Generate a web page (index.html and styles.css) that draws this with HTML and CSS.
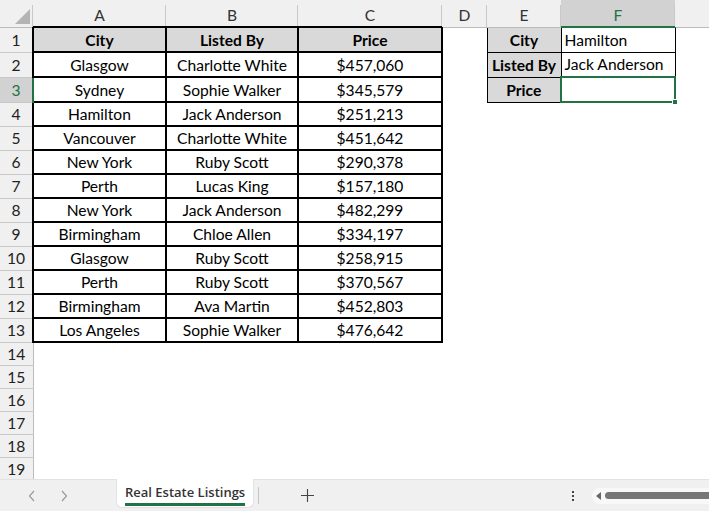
FILE: index.html
```html
<!DOCTYPE html>
<html lang="en">
<head>
    <meta charset="UTF-8">
    <title>Real Estate Listings</title>
    <link rel="stylesheet" href="styles.css">
</head>
<body>

    <div class="sheet">
        <table class="grid">
            <colgroup>
                <col class="w-hdr">
                <col class="w-a">
                <col class="w-b">
                <col class="w-c">
                <col class="w-d">
                <col class="w-e">
                <col class="w-f">
                <col>
            </colgroup>

            <!-- Column letters -->
            <tr class="heads">
                <th class="corner"><span class="tri"></span></th>
                <th>A</th>
                <th>B</th>
                <th>C</th>
                <th>D</th>
                <th>E</th>
                <th class="sel">F</th>
                <th class="last"></th>
            </tr>

            <tr class="tall">
                <th class="num">1</th>
                <td class="box title">City</td>
                <td class="box title">Listed By</td>
                <td class="box title">Price</td>
                <td></td>
                <td class="key">City</td>
                <td class="val">Hamilton</td>
                <td></td>
            </tr>
            <tr class="tall">
                <th class="num">2</th>
                <td class="box">Glasgow</td>
                <td class="box">Charlotte White</td>
                <td class="box">$457,060</td>
                <td></td>
                <td class="key">Listed By</td>
                <td class="val">Jack Anderson</td>
                <td></td>
            </tr>
            <tr class="tall">
                <th class="num sel">3</th>
                <td class="box">Sydney</td>
                <td class="box">Sophie Walker</td>
                <td class="box">$345,579</td>
                <td></td>
                <td class="key">Price</td>
                <td class="val active"><span class="handle"></span></td>
                <td></td>
            </tr>
            <tr>
                <th class="num">4</th>
                <td class="box">Hamilton</td>
                <td class="box">Jack Anderson</td>
                <td class="box">$251,213</td>
                <td></td><td></td><td></td><td></td>
            </tr>
            <tr>
                <th class="num">5</th>
                <td class="box">Vancouver</td>
                <td class="box">Charlotte White</td>
                <td class="box">$451,642</td>
                <td></td><td></td><td></td><td></td>
            </tr>
            <tr>
                <th class="num">6</th>
                <td class="box">New York</td>
                <td class="box">Ruby Scott</td>
                <td class="box">$290,378</td>
                <td></td><td></td><td></td><td></td>
            </tr>
            <tr>
                <th class="num">7</th>
                <td class="box">Perth</td>
                <td class="box">Lucas King</td>
                <td class="box">$157,180</td>
                <td></td><td></td><td></td><td></td>
            </tr>
            <tr>
                <th class="num">8</th>
                <td class="box">New York</td>
                <td class="box">Jack Anderson</td>
                <td class="box">$482,299</td>
                <td></td><td></td><td></td><td></td>
            </tr>
            <tr>
                <th class="num">9</th>
                <td class="box">Birmingham</td>
                <td class="box">Chloe Allen</td>
                <td class="box">$334,197</td>
                <td></td><td></td><td></td><td></td>
            </tr>
            <tr>
                <th class="num">10</th>
                <td class="box">Glasgow</td>
                <td class="box">Ruby Scott</td>
                <td class="box">$258,915</td>
                <td></td><td></td><td></td><td></td>
            </tr>
            <tr>
                <th class="num">11</th>
                <td class="box">Perth</td>
                <td class="box">Ruby Scott</td>
                <td class="box">$370,567</td>
                <td></td><td></td><td></td><td></td>
            </tr>
            <tr>
                <th class="num">12</th>
                <td class="box">Birmingham</td>
                <td class="box">Ava Martin</td>
                <td class="box">$452,803</td>
                <td></td><td></td><td></td><td></td>
            </tr>
            <tr>
                <th class="num">13</th>
                <td class="box">Los Angeles</td>
                <td class="box">Sophie Walker</td>
                <td class="box">$476,642</td>
                <td></td><td></td><td></td><td></td>
            </tr>

            <!-- Empty rows -->
            <tr class="short"><th class="num">14</th><td></td><td></td><td></td><td></td><td></td><td></td><td></td></tr>
            <tr class="short"><th class="num">15</th><td></td><td></td><td></td><td></td><td></td><td></td><td></td></tr>
            <tr class="short"><th class="num">16</th><td></td><td></td><td></td><td></td><td></td><td></td><td></td></tr>
            <tr class="short"><th class="num">17</th><td></td><td></td><td></td><td></td><td></td><td></td><td></td></tr>
            <tr class="short"><th class="num">18</th><td></td><td></td><td></td><td></td><td></td><td></td><td></td></tr>
            <tr class="short"><th class="num">19</th><td></td><td></td><td></td><td></td><td></td><td></td><td></td></tr>
        </table>
    </div>

    <!-- Sheet tabs -->
    <div class="tabbar">
        <div class="nav">
            <svg width="8" height="12" viewBox="0 0 8 12"><path d="M6 1 L1.5 6 L6 11" fill="none" stroke="#9a9a9a" stroke-width="1.2"/></svg>
            <svg width="8" height="12" viewBox="0 0 8 12"><path d="M2 1 L6.5 6 L2 11" fill="none" stroke="#9a9a9a" stroke-width="1.2"/></svg>
        </div>
        <div class="tab">Real Estate Listings</div>
        <div class="sep"></div>
        <div class="add">
            <svg width="13" height="13" viewBox="0 0 13 13"><path d="M6.5 0 V13 M0 6.5 H13" stroke="#444" stroke-width="1.1"/></svg>
        </div>
        <div class="more">
            <span></span><span></span><span></span>
        </div>
        <div class="scroll">
            <span class="arrow"></span>
            <span class="thumb"></span>
        </div>
    </div>

</body>
</html>
```

FILE: styles.css
```css
* {
    margin: 0;
    padding: 0;
    box-sizing: border-box;
}

body {
    width: 709px;
    height: 511px;
    overflow: hidden;
    background: #fff;
    font-family: Lato, "Noto Sans", sans-serif;
    font-size: 15.6px;
    color: #000;
}

.sheet {
    height: 479px;
    overflow: hidden;
}

.grid {
    width: 709px;
    table-layout: fixed;
    border-collapse: collapse;
}

.w-hdr { width: 33px; }
.w-a { width: 133px; }
.w-b { width: 132px; }
.w-c { width: 144px; }
.w-d { width: 45px; }
.w-e { width: 74px; }
.w-f { width: 114px; }

tr { height: 24px; }
tr.tall { height: 25px; }
tr.short { height: 23px; }

td {
    padding: 0 2px;
    white-space: nowrap;
    overflow: hidden;
    text-align: center;
    line-height: 20px;
}

/* column letters */
.heads {
    height: 27px;
}

.heads th {
    position: relative;
    background: #f0f0f0;
    border-bottom: 1px solid #bcbcbc;
    font-weight: normal;
    color: #333;
    padding-top: 4px;
}

.heads th::after {
    content: "";
    position: absolute;
    top: 5px;
    right: 0;
    bottom: 0;
    width: 1px;
    background: #c8c8c8;
}

.heads th.last::after { display: none; }

.heads th.sel {
    background: #d2d2d2;
    color: #217346;
    border-bottom: 2px solid #217346;
}

.corner .tri {
    position: absolute;
    left: 15px;
    top: 9px;
    width: 15px;
    height: 15px;
    background: #b4b4b4;
    clip-path: polygon(100% 0, 100% 100%, 0 100%);
}

/* row numbers */
.num {
    background: #f0f0f0;
    border-right: 1px solid #bcbcbc;
    border-bottom: 1px solid #c8c8c8;
    font-weight: normal;
    color: #222;
    text-align: center;
}

.num.sel {
    background: #d2d2d2;
    color: #217346;
    border-right: 2px solid #217346;
}

/* main listing table */
.box {
    border: 2px solid #000;
}

.title {
    background: #d9d9d9;
    font-weight: bold;
}

/* lookup box */
.key {
    border: 1px solid #000;
    background: #d9d9d9;
    font-weight: bold;
    padding: 0 1px;
}

.val {
    border: 1px solid #000;
    text-align: left;
    padding-left: 3px;
}

.val.active {
    position: relative;
    overflow: visible;
    border: 2px solid #217346;
}

.handle {
    position: absolute;
    right: -4px;
    bottom: -4px;
    width: 6px;
    height: 6px;
    background: #217346;
    border: 1px solid #fff;
}

/* sheet tab bar */
.tabbar {
    height: 32px;
    display: flex;
    align-items: center;
    background: #f0f0f0;
    border-top: 1px solid #e2e2e2;
    font-family: "Open Sans", Lato, sans-serif;
}

.nav {
    width: 116px;
    display: flex;
    gap: 24px;
    padding-left: 28px;
}

.tab {
    align-self: stretch;
    margin-top: -1px;
    margin-bottom: 3px;
    padding: 4px 8px 0;
    background: #fff;
    border: 1px solid #e2e2e2;
    border-top: none;
    border-radius: 0 0 6px 6px;
    font-size: 13px;
    font-weight: 600;
    color: #333;
    line-height: 18px;
}

.tab::after {
    content: "";
    display: block;
    height: 3px;
    margin-top: 2px;
    background: #217346;
}

.sep {
    width: 1px;
    height: 17px;
    margin-left: 4px;
    background: #c6c6c6;
}

.add {
    width: 13px;
    margin-left: 42px;
    display: flex;
}

.more {
    margin-left: 258px;
    display: flex;
    flex-direction: column;
    gap: 2px;
}

.more span {
    width: 2px;
    height: 2px;
    background: #444;
}

.scroll {
    margin-left: 18px;
    flex: 1;
    height: 16px;
    display: flex;
    align-items: center;
    gap: 4px;
    padding-left: 4px;
    background: #f8f8f8;
    border-radius: 8px 0 0 8px;
}

.arrow {
    width: 0;
    height: 0;
    border-top: 4px solid transparent;
    border-bottom: 4px solid transparent;
    border-right: 5px solid #666;
}

.thumb {
    flex: 1;
    height: 7px;
    background: #767676;
    border-radius: 4px 0 0 4px;
}
```
